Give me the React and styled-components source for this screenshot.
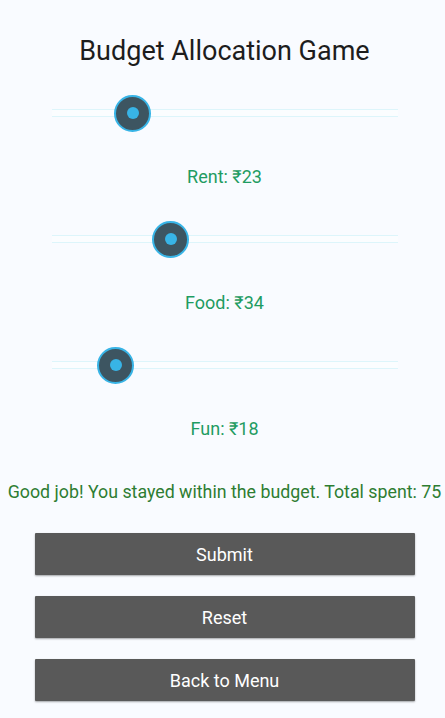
import React, { useState } from "react";
import styled, { createGlobalStyle } from "styled-components";

const Global = createGlobalStyle`
  html, body { margin: 0; padding: 0; background: #f9fbff; }
  body { font-family: Roboto, "Noto Sans", sans-serif; }
`;

const Page = styled.div`
  box-sizing: border-box;
  width: 445px;
  min-height: 718px;
  padding: 32px 0 0 4px;
  display: flex;
  flex-direction: column;
  align-items: center;
  background: #f9fbff;
`;

const Title = styled.h1`
  margin: 0;
  font-size: 27px;
  font-weight: 400;
  color: #1d1d1d;
  line-height: 38px;
`;

const Block = styled.div`
  display: flex;
  flex-direction: column;
  align-items: center;
  margin-top: ${(p) => p.$top}px;
`;

const TrackWrap = styled.div`
  position: relative;
  width: 346px;
  height: 38px;
  display: flex;
  align-items: center;
`;

const Track = styled.div`
  box-sizing: border-box;
  width: 100%;
  height: 8px;
  border-top: 1px solid #ddf5fb;
  border-bottom: 1px solid #ddf5fb;
  background: #fbfdff;
`;

const Thumb = styled.div`
  position: absolute;
  top: 0.5px;
  box-sizing: border-box;
  width: 37px;
  height: 37px;
  margin-left: -18.5px;
  border-radius: 50%;
  background: #3d5561;
  border: 2.5px solid #38b4e6;
  display: flex;
  align-items: center;
  justify-content: center;
  &::after {
    content: "";
    width: 12px;
    height: 12px;
    border-radius: 50%;
    background: #38b4e6;
  }
`;

const Label = styled.div`
  margin-top: 35px;
  font-size: 18px;
  line-height: 20px;
  color: #1f9c62;
`;

const Message = styled.div`
  margin-top: 43px;
  font-size: 17.8px;
  line-height: 20px;
  color: #2e7d32;
  white-space: nowrap;
`;

const Buttons = styled.div`
  margin-top: 31px;
  display: flex;
  flex-direction: column;
  gap: 21px;
`;

const Button = styled.button`
  width: 380px;
  height: 42px;
  border: none;
  border-radius: 1px;
  background: #595959;
  color: #ffffff;
  font-family: Roboto, "Noto Sans", sans-serif;
  font-size: 18px;
  box-shadow: 0 1px 2px rgba(0, 0, 0, 0.35);
  cursor: pointer;
`;

function Slider({ value, top, label }) {
  return (
    <Block $top={top}>
      <TrackWrap>
        <Track />
        <Thumb style={{ left: `${2 + value * 3.45}px` }} />
      </TrackWrap>
      <Label>
        {label}: ₹{value}
      </Label>
    </Block>
  );
}

export default function App() {
  const [vals] = useState({ rent: 23, food: 34, fun: 18 });
  const total = vals.rent + vals.food + vals.fun;
  return (
    <Page>
      <Global />
      <Title>Budget Allocation Game</Title>
      <Slider value={vals.rent} label="Rent" top={24} />
      <Slider value={vals.food} label="Food" top={33} />
      <Slider value={vals.fun} label="Fun" top={33} />
      <Message>
        Good job! You stayed within the budget. Total spent: {total}
      </Message>
      <Buttons>
        <Button>Submit</Button>
        <Button>Reset</Button>
        <Button>Back to Menu</Button>
      </Buttons>
    </Page>
  );
}
